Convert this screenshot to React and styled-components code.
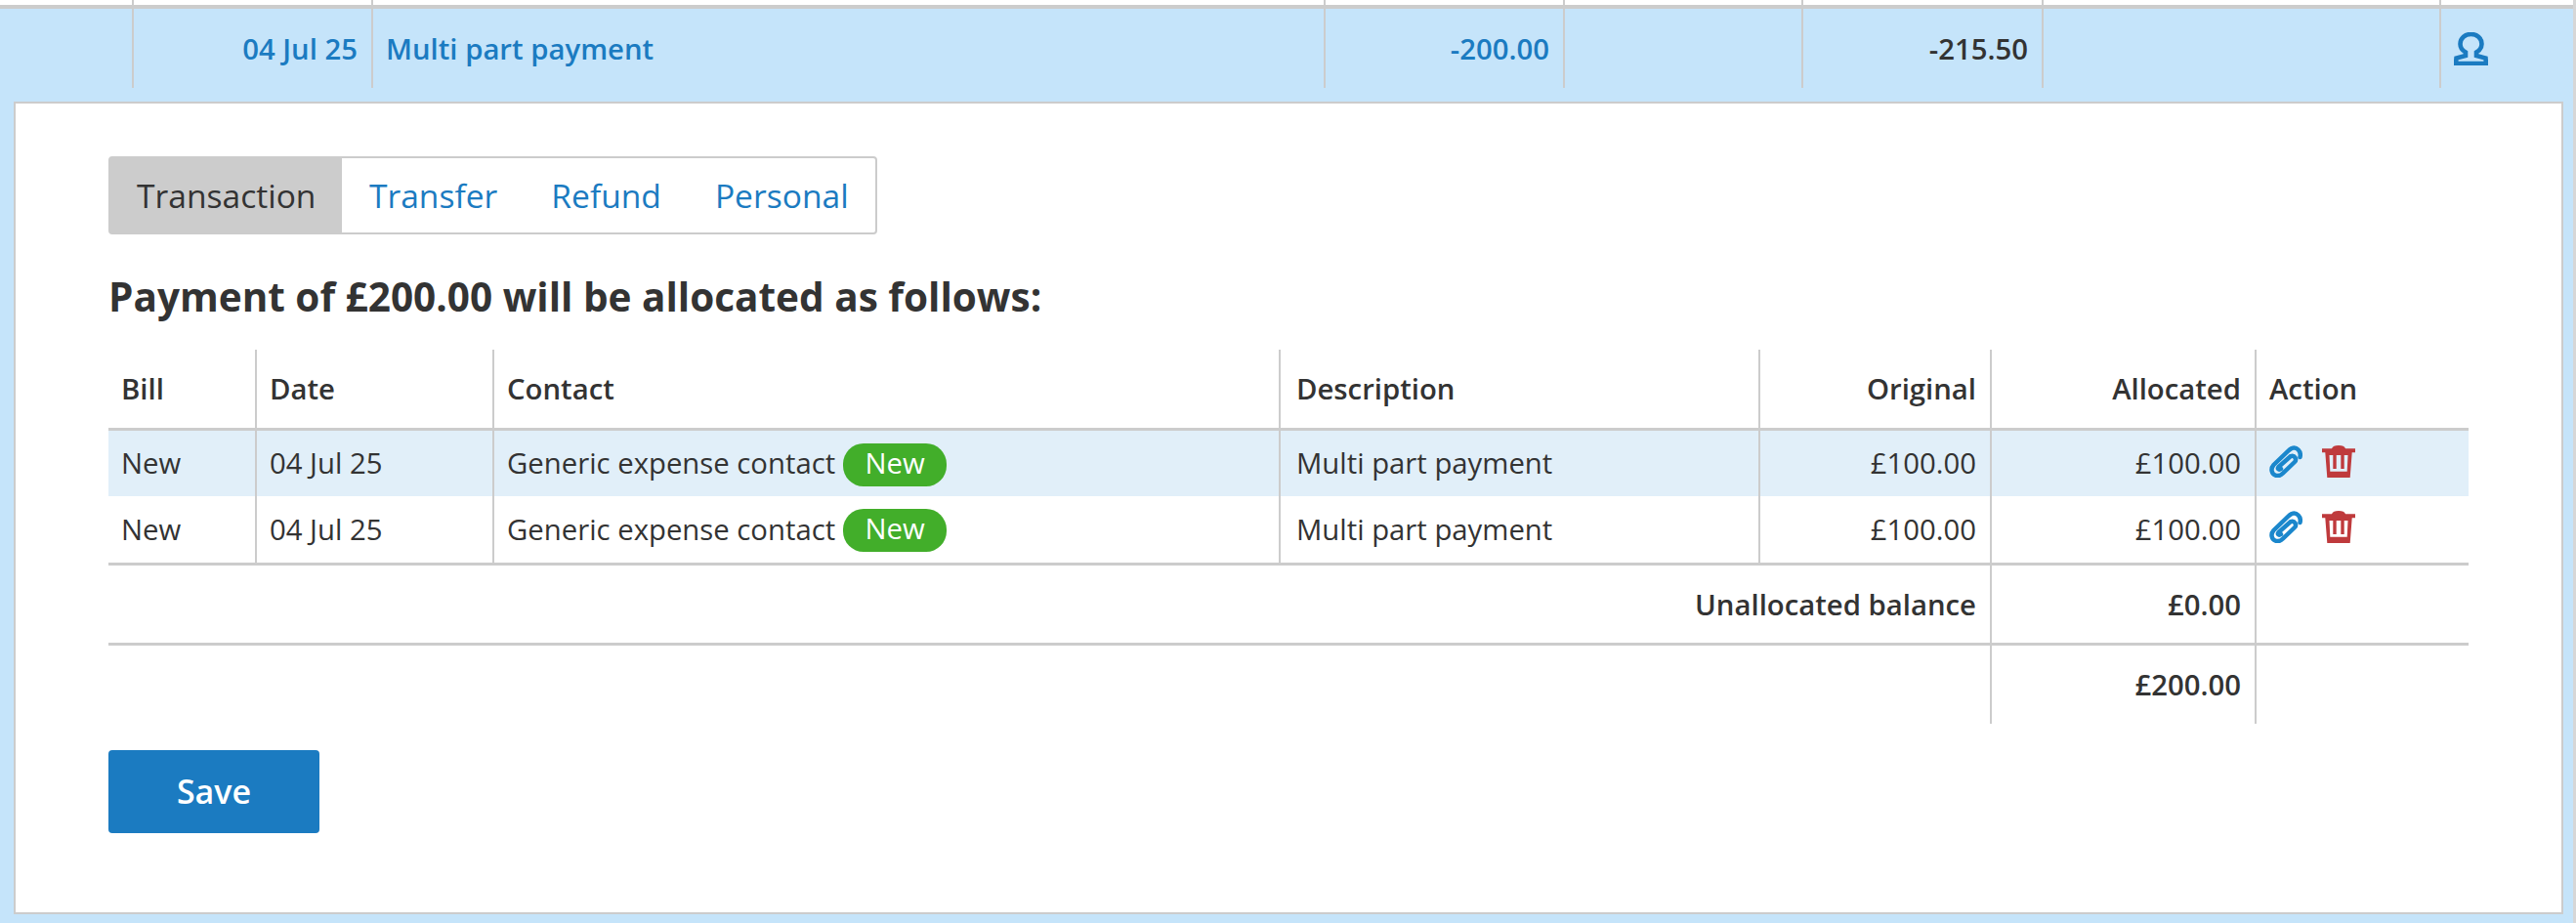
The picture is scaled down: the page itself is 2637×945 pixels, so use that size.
import React from 'react';
import styled, { createGlobalStyle } from 'styled-components';

const GlobalStyle = createGlobalStyle`
  html, body {
    margin: 0;
    padding: 0;
    background: #fff;
  }
  body {
    font-family: "Open Sans", "Noto Sans", sans-serif;
    color: #333;
  }
`;

const Page = styled.div`
  display: flex;
  width: 2637px;
  height: 945px;
  overflow: hidden;
`;

const Content = styled.div`
  flex: 1;
  min-width: 0;
`;

const ScrollEdge = styled.div`
  width: 3px;
  background: #d6d6d6;
`;

const PrevRow = styled.div`
  display: grid;
  grid-template-columns: 137px 245px 975px 245px 244px 246px 407px 135px;
  height: 5px;
  border-bottom: 4px solid #ccc;
`;

const PrevCell = styled.div`
  border-right: 2px solid #ccc;
  &:last-child { border-right: 0; }
`;

const Selected = styled.div`
  background: #c5e4fa;
  height: 936px;
`;

const SummaryRow = styled.div`
  display: grid;
  grid-template-columns: 137px 245px 975px 245px 244px 246px 407px 135px;
  height: 81px;
  font-size: 29.3px;
  font-weight: 600;
  color: #1b7bc1;
`;

const SummaryCell = styled.div`
  display: flex;
  align-items: center;
  justify-content: ${(p) => (p.$right ? 'flex-end' : 'flex-start')};
  padding: 0 ${(p) => (p.$right ? '14px' : '13px')};
  border-right: 2px solid #ccc;
  color: ${(p) => (p.$dark ? '#333' : 'inherit')};
  &:last-child { border-right: 0; }
`;

const Panel = styled.div`
  margin: 14px 10px 0 14px;
  height: 774px;
  background: #fff;
  border: 2px solid #ccc;
  padding: 54px 0 0 95px;
`;

const Tabs = styled.div`
  display: inline-flex;
  height: 76px;
  border: 2px solid #ccc;
  border-radius: 4px;
  background: #fff;
  font-size: 33.6px;
  color: #1b7bc1;
`;

const Tab = styled.div`
  display: flex;
  align-items: center;
  padding: 0 ${(p) => (p.$active ? '27px' : '27.5px')};
  background: ${(p) => (p.$active ? '#ccc' : 'transparent')};
  color: ${(p) => (p.$active ? '#333' : 'inherit')};
`;

const Heading = styled.h2`
  margin: 37px 0 0;
  font-size: 40.5px;
  line-height: 54px;
  font-weight: 700;
  color: #333;
`;

const Table = styled.table`
  width: 2416px;
  margin-top: 27px;
  border-collapse: collapse;
  table-layout: fixed;
  font-size: 29.3px;
`;

const HeadCell = styled.th`
  height: 80px;
  padding: 0 14px 0 ${(p) => (p.$indent ? '16px' : '13px')};
  font-weight: 600;
  text-align: ${(p) => (p.$right ? 'right' : 'left')};
  border-right: 2px solid #ccc;
  border-bottom: 3px solid #ccc;
  &:last-child { border-right: 0; }
`;

const BodyRow = styled.tr`
  height: ${(p) => (p.$tint ? '68px' : '70px')};
  background: ${(p) => (p.$tint ? '#e1eff9' : '#fff')};
`;

const BodyCell = styled.td`
  padding: 0 14px 0 ${(p) => (p.$indent ? '16px' : '13px')};
  text-align: ${(p) => (p.$right ? 'right' : 'left')};
  border-right: 2px solid #ccc;
  &:last-child { border-right: 0; }
`;

const ContactLine = styled.div`
  display: flex;
  align-items: center;
  gap: 8px;
`;

const Badge = styled.span`
  display: block;
  width: 106px;
  height: 44px;
  margin-top: 3px;
  line-height: 40px;
  border-radius: 21px;
  background: #42ae2a;
  color: #fff;
  text-align: center;
`;

const FootRow = styled.tr`
  height: ${(p) => (p.$tall ? '82px' : '81px')};
  border-top: 3px solid #ccc;
`;

const FootCell = styled.td`
  padding: 0 14px;
  font-weight: 600;
  text-align: right;
  border-right: 2px solid #ccc;
  &:last-child { border-right: 0; }
`;

const Actions = styled.div`
  display: flex;
  align-items: center;
  gap: 20px;
  margin-bottom: 4px;
`;

const IconSvg = styled.svg`
  display: block;
  flex: none;
`;

const SaveButton = styled.button`
  display: block;
  width: 216px;
  height: 85px;
  margin-top: 27px;
  border: 0;
  border-radius: 4px;
  background: #1b7bc1;
  color: #fff;
  font: 600 34px "Open Sans", sans-serif;
`;

const UserIcon = () => (
  <IconSvg width="35" height="34" viewBox="0 0 35 34" fill="none" stroke="#1b7bc1" strokeWidth="4.6">
    <path d="M12 20.500C8.500 18.500 6.500 15 6.500 12C6.500 6 11.500 2 17.500 2C23.500 2 28.500 6 28.500 12C28.500 15 26.500 18.500 23 20.500V24L32.500 26.500L33 32H2L2.500 26.500L12 24Z" />
  </IconSvg>
);

const ClipIcon = () => (
  <IconSvg width="34" height="33" viewBox="0 0 34 33" fill="none" stroke="#1b87cc" strokeWidth="4.5" strokeLinecap="round">
    <path d="M31.500 12C33 6 28 1 23 3C21 4 20 5 18.500 6.500L4.500 20C1 24 2.500 29 6 30.500C9.500 32 12 30.500 14 28.500L26 17C28.500 14.500 26 9.500 22 11L9.500 22C8 24 10 25.500 12 24" />
  </IconSvg>
);

const TrashIcon = () => (
  <IconSvg width="34" height="33" viewBox="0 0 34 33" fill="#bf3a3c">
    <path
      fillRule="evenodd"
      d="M0 3.300H10C11 1 13 0 17 0C21 0 23 1 24 3.300H34V7.300H0ZM3.300 7.300H30.700L28.700 33H5.300ZM7.500 10L8.300 26.700H25.700L26.500 10H22.700V24H19.300V10H14.700V24H11.300V10Z"
    />
  </IconSvg>
);

const rows = [true, false];

const App = () => (
  <Page>
    <GlobalStyle />
    <Content>
      <PrevRow>
        {Array.from({ length: 8 }, (_, i) => <PrevCell key={i} />)}
      </PrevRow>
      <Selected>
        <SummaryRow>
          <SummaryCell />
          <SummaryCell $right>04 Jul 25</SummaryCell>
          <SummaryCell>Multi part payment</SummaryCell>
          <SummaryCell $right>-200.00</SummaryCell>
          <SummaryCell />
          <SummaryCell $right $dark>-215.50</SummaryCell>
          <SummaryCell />
          <SummaryCell><UserIcon /></SummaryCell>
        </SummaryRow>
        <Panel>
          <Tabs>
            <Tab $active>Transaction</Tab>
            <Tab>Transfer</Tab>
            <Tab>Refund</Tab>
            <Tab>Personal</Tab>
          </Tabs>
          <Heading>Payment of £200.00 will be allocated as follows:</Heading>
          <Table>
            <colgroup>
              <col width="151" />
              <col width="243" />
              <col width="805" />
              <col width="491" />
              <col width="237" />
              <col width="271" />
              <col width="218" />
            </colgroup>
            <thead>
              <tr>
                <HeadCell>Bill</HeadCell>
                <HeadCell>Date</HeadCell>
                <HeadCell>Contact</HeadCell>
                <HeadCell $indent>Description</HeadCell>
                <HeadCell $right>Original</HeadCell>
                <HeadCell $right>Allocated</HeadCell>
                <HeadCell>Action</HeadCell>
              </tr>
            </thead>
            <tbody>
              {rows.map((tint, i) => (
                <BodyRow key={i} $tint={tint}>
                  <BodyCell>New</BodyCell>
                  <BodyCell>04 Jul 25</BodyCell>
                  <BodyCell>
                    <ContactLine>Generic expense contact<Badge>New</Badge></ContactLine>
                  </BodyCell>
                  <BodyCell $indent>Multi part payment</BodyCell>
                  <BodyCell $right>£100.00</BodyCell>
                  <BodyCell $right>£100.00</BodyCell>
                  <BodyCell><Actions><ClipIcon /><TrashIcon /></Actions></BodyCell>
                </BodyRow>
              ))}
              <FootRow $tall>
                <FootCell colSpan={5}>Unallocated balance</FootCell>
                <FootCell>£0.00</FootCell>
                <FootCell />
              </FootRow>
              <FootRow>
                <FootCell colSpan={5} />
                <FootCell>£200.00</FootCell>
                <FootCell />
              </FootRow>
            </tbody>
          </Table>
          <SaveButton>Save</SaveButton>
        </Panel>
      </Selected>
    </Content>
    <ScrollEdge />
  </Page>
);

export default App;
